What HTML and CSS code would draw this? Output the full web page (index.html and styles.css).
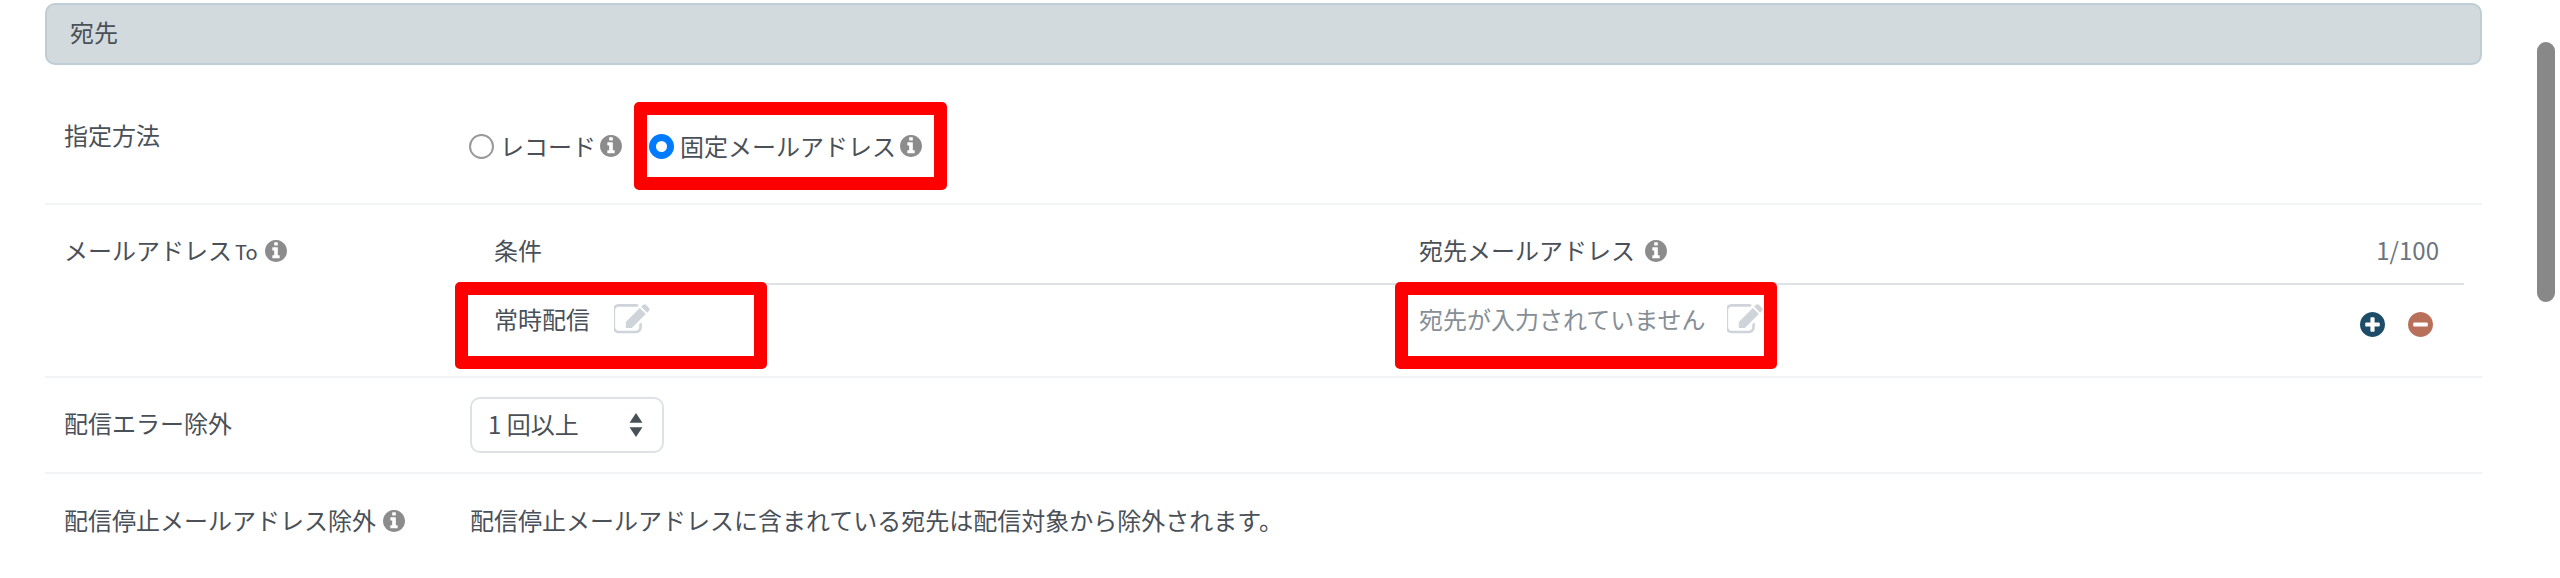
FILE: index.html
```html
<!DOCTYPE html>
<html lang="ja">
<head>
  <meta charset="UTF-8" />
  <title>宛先</title>
  <link rel="stylesheet" href="styles.css">
</head>
<body>
  <svg class="icon-defs" aria-hidden="true">
    <symbol id="i-info" viewBox="0 128 1536 1536"><path d="M1024 1376v-160q0-14-9-23t-23-9h-96v-512q0-14-9-23t-23-9h-320q-14 0-23 9t-9 23v160q0 14 9 23t23 9h96v320h-96q-14 0-23 9t-9 23v160q0 14 9 23t23 9h448q14 0 23-9t9-23zm-128-896v-160q0-14-9-23t-23-9h-192q-14 0-23 9t-9 23v160q0 14 9 23t23 9h192q14 0 23-9t9-23zm640 416q0 209-103 385.5t-279.5 279.5-385.5 103-385.5-103-279.5-279.5-103-385.5 103-385.5 279.5-279.5 385.5-103 385.5 103 279.5 279.5 103 385.5z"/></symbol>
    <symbol id="i-edit" viewBox="128 128 1664 1536"><path d="M1408 1058v190q0 119-84.5 203.5t-203.5 84.5h-832q-119 0-203.5-84.5t-84.5-203.5v-832q0-119 84.5-203.5t203.5-84.5h832q63 0 117 25 15 7 18 23 3 17-9 29l-49 49q-14 14-32 8-23-6-45-6h-832q-66 0-113 47t-47 113v832q0 66 47 113t113 47h832q66 0 113-47t47-113v-126q0-13 9-22l64-64q15-15 35-7t20 29zm-96-738l288 288-672 672h-288v-288zm444 132l-92 92-288-288 92-92q28-28 68-28t68 28l152 152q28 28 28 68t-28 68z"/></symbol>
    <symbol id="i-plus" viewBox="0 128 1536 1536"><path d="M1216 960v-128q0-26-19-45t-45-19h-256v-256q0-26-19-45t-45-19h-128q-26 0-45 19t-19 45v256h-256q-26 0-45 19t-19 45v128q0 26 19 45t45 19h256v256q0 26 19 45t45 19h128q26 0 45-19t19-45v-256h256q26 0 45-19t19-45zm320-64q0 209-103 385.5t-279.5 279.5-385.5 103-385.5-103-279.5-279.5-103-385.5 103-385.5 279.5-279.5 385.5-103 385.5 103 279.5 279.5 103 385.5z"/></symbol>
    <symbol id="i-minus" viewBox="0 128 1536 1536"><path d="M1216 960v-128q0-26-19-45t-45-19h-768q-26 0-45 19t-19 45v128q0 26 19 45t45 19h768q26 0 45-19t19-45zm320-64q0 209-103 385.5t-279.5 279.5-385.5 103-385.5-103-279.5-279.5-103-385.5 103-385.5 279.5-279.5 385.5-103 385.5 103 279.5 279.5 103 385.5z"/></symbol>
  </svg>

  <div class="page">
    <div class="section-head">宛先</div>

    <div class="row row-method">
      <div class="label">指定方法</div>
      <div class="value radios">
        <span class="radio"></span>
        <span class="radio-text">レコード</span>
        <svg class="info"><use href="#i-info"/></svg>
        <span class="radio radio-on"></span>
        <span class="radio-text">固定メールアドレス</span>
        <svg class="info"><use href="#i-info"/></svg>
      </div>
    </div>

    <div class="row row-to">
      <div class="label">メールアドレス<small>To</small><svg class="info"><use href="#i-info"/></svg></div>
      <div class="value to-table">
        <div class="to-head">
          <div class="col-cond">条件</div>
          <div class="col-addr">宛先メールアドレス<svg class="info"><use href="#i-info"/></svg></div>
          <div class="count">1/100</div>
        </div>
        <div class="to-body">
          <div class="col-cond">常時配信<svg class="edit"><use href="#i-edit"/></svg></div>
          <div class="col-addr empty">宛先が入力されていません<svg class="edit"><use href="#i-edit"/></svg></div>
          <div class="ops">
            <svg class="op op-add"><use href="#i-plus"/></svg>
            <svg class="op op-del"><use href="#i-minus"/></svg>
          </div>
        </div>
      </div>
    </div>

    <div class="row row-error">
      <div class="label">配信エラー除外</div>
      <div class="value">
        <div class="select">
          <span>1 回以上</span>
          <svg class="select-arrow" viewBox="0 0 16 26"><path d="M8 0l7 10.500H1zM8 26L1 15.500h14z"/></svg>
        </div>
      </div>
    </div>

    <div class="row row-stop">
      <div class="label">配信停止メールアドレス除外<svg class="info"><use href="#i-info"/></svg></div>
      <div class="value">配信停止メールアドレスに含まれている宛先は配信対象から除外されます。</div>
    </div>
  </div>

  <!-- annotation boxes drawn over the screenshot -->
  <div class="mark mark-method"></div>
  <div class="mark mark-cond"></div>
  <div class="mark mark-addr"></div>

  <div class="scroll-thumb"></div>
</body>
</html>
```

FILE: styles.css
```css
html, body {
  margin: 0;
  height: 578px;
  overflow: hidden;
  background: #fff;
}
body {
  font-family: "Noto Sans CJK JP", "Noto Sans", sans-serif;
  font-size: 24px;
  line-height: 34px;
  color: #495057;
  position: relative;
}
.icon-defs {
  display: none;
}
.page {
  padding: 3px 78px 0 45px;
}
.section-head {
  height: 58px;
  line-height: 54px;
  padding-left: 23px;
  background: #d3dadd;
  border: 2px solid #bfcdd6;
  border-radius: 10px;
}
.row {
  display: flex;
  border-bottom: 2px solid #f1f3f5;
}
.label {
  width: 406px;
  padding-left: 19px;
  flex: none;
}
.label small {
  font-size: 20px;
  margin-left: 3px;
}
.value {
  flex: 1;
}
.info {
  width: 22px;
  height: 22px;
  margin-left: 7px;
  fill: #8c8c8c;
  vertical-align: -2px;
}

/* method */
.row-method {
  height: 138px;
}
.row-method .label {
  padding-top: 53px;
}
.radios {
  display: flex;
  align-items: center;
  height: 34px;
  padding-top: 64px;
  margin-left: -1px;
}
.radio {
  box-sizing: border-box;
  width: 25px;
  height: 25px;
  border: 2px solid #999;
  border-radius: 50%;
  margin-right: 6px;
}
.radio-on {
  border: 7px solid #007bff;
  margin-left: 27px;
}
.radios .info {
  margin-left: 4px;
}

/* address table */
.row-to .label {
  padding-top: 28px;
}
.to-table {
  margin-right: 18px;
}
.to-head, .to-body {
  display: grid;
  grid-template-columns: 925px 1fr auto;
}
.to-head {
  padding-top: 28px;
  height: 50px;
  border-bottom: 2px solid #dee2e6;
}
.to-body {
  height: 74px;
  padding-top: 17px;
}
.col-cond {
  padding-left: 24px;
}
.col-addr {
  padding-left: 24px;
}
.col-addr .info {
  margin-left: 10px;
}
.count {
  font-size: 24px;
  color: #6c757d;
  padding-right: 25px;
}
.edit {
  width: 37px;
  height: 32px;
  margin-left: 24px;
  fill: #ced4da;
  vertical-align: -7px;
}
.empty .edit {
  margin-left: 21px;
}
.empty {
  color: #868e96;
}
.ops {
  display: flex;
  gap: 23px;
  padding: 10px 31px 0 0;
}
.op {
  width: 25px;
  height: 25px;
}
.op-add {
  fill: #1c4c68;
}
.op-del {
  fill: #b8705a;
}

/* error row */
.row-error {
  height: 94px;
  align-items: center;
}
.row-error .label {
  padding-bottom: 4px;
}
.select {
  box-sizing: border-box;
  display: flex;
  align-items: center;
  justify-content: space-between;
  width: 194px;
  height: 56px;
  padding: 0 18px 0 16px;
  background: #fff;
  border: 2px solid #dee2e6;
  border-radius: 10px;
  color: #495057;
}
.select span {
  margin-top: -3px;
}
.select-arrow {
  width: 16px;
  height: 24px;
  fill: #495057;
}

/* stop row */
.row-stop {
  padding-top: 29px;
  border-bottom: none;
}

/* annotations */
.mark {
  position: absolute;
  box-sizing: border-box;
  border: 13px solid #f00;
  border-radius: 5px;
}
.mark-method {
  left: 634px;
  top: 102px;
  width: 313px;
  height: 88px;
}
.mark-cond {
  left: 455px;
  top: 282px;
  width: 312px;
  height: 87px;
}
.mark-addr {
  left: 1395px;
  top: 282px;
  width: 382px;
  height: 87px;
}

.scroll-thumb {
  position: absolute;
  left: 2537px;
  top: 42px;
  width: 18px;
  height: 260px;
  background: #888;
  border-radius: 9px;
}
```
